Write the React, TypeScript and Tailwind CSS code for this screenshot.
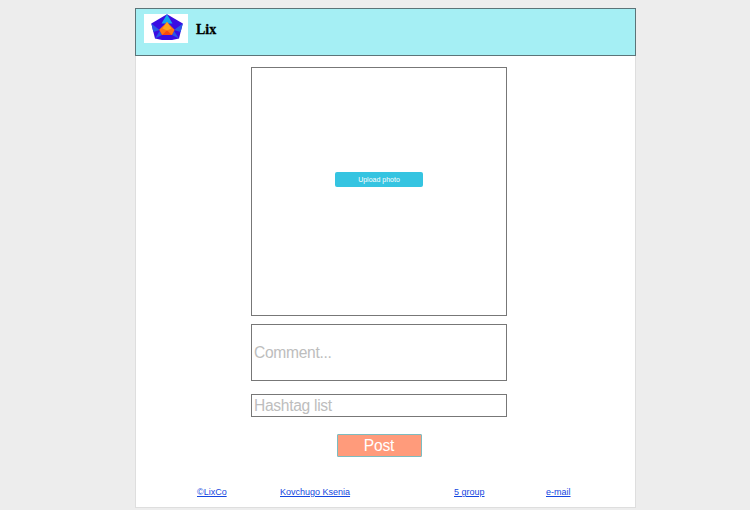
function Logo() {
  return (
    <svg viewBox="0 0 44 29" className="block h-[29px] w-11 shrink-0 bg-white">
      <polygon points="23,0.3 38.8,9.4 35,24.6 28,26 18,26 11,24.6 7.3,9.4" fill="#3a0ce2" />
      <polygon points="23,0.3 17.5,9.4 28.5,9.4" fill="#14a4ec" />
      <polygon points="7.3,9.4 9.4,18 15.7,16" fill="#2858e4" />
      <polygon points="38.8,9.4 36.6,18 30,16" fill="#2858e4" />
      <polygon points="15.7,17 11,24.6 18,21" fill="#2858e4" />
      <polygon points="30,17 35,24.6 28,21" fill="#2858e4" />
      <polygon points="23,8 30.6,15.7 28,21 18,21 15.2,15.7" fill="#ff7412" />
      <polygon points="23,8 27.5,14.5 23,16.5 18.5,14.5" fill="#ffa51c" />
      <polygon points="18,21 23,16.5 28,21" fill="#f9480e" />
    </svg>
  );
}

export default function App() {
  return (
    <div className="flex h-[510px] w-[750px] justify-center overflow-hidden bg-[#ededed] pt-2 pl-[21px] font-['Liberation_Sans',Arial,sans-serif]">
      <div className="h-[500px] w-[501px] border border-t-0 border-[#dedede] bg-white">
        <header className="-mx-px flex h-12 items-start border border-[#5c7478] bg-[#a5eff4] pt-[5px] pl-2">
          <Logo />
          <h1 className="mt-[7px] ml-[8px] font-['Liberation_Serif',serif] text-[14px] leading-[18px] font-bold text-black [-webkit-text-stroke:0.3px_black]">Lix</h1>
        </header>
        <main className="ml-[115px] flex w-64 flex-col items-center">
          <section className="mt-[11px] flex h-[249px] w-full justify-start border border-[#777777]">
            <button className="mt-[104px] ml-[83px] h-[15px] w-[88px] rounded-[2px] bg-[#35c4e1] text-[7px] leading-[15px] text-white">Upload photo</button>
          </section>
          <textarea
            placeholder="Comment..."
            className="mt-2 block h-[57px] w-full resize-none border border-[#777777] px-[2px] pt-[18px] text-[15.6px] leading-[20px] tracking-[-0.3px] outline-none placeholder:text-[#bdbdbd]"
          />
          <input
            placeholder="Hashtag list"
            className="mt-[13px] block h-[23px] w-full border border-[#777777] px-[2px] text-[15.6px] leading-[20px] tracking-[-0.3px] outline-none placeholder:text-[#bdbdbd]"
          />
          <button className="mt-[17px] h-[23px] w-[85px] rounded-[1px] border border-[#7cbcc0] bg-[#ff9b7b] text-[15.6px] leading-[21px] tracking-[-0.2px] text-white">Post</button>
        </main>
        <footer className="mt-[30px] flex pl-[61px] text-[9px] leading-[10px] whitespace-nowrap text-[#1547e0]">
          <a href="#" className="w-[83px] underline">©LixCo</a>
          <a href="#" className="w-[174px] underline">Kovchugo Ksenia</a>
          <a href="#" className="w-[92px] underline">5 group</a>
          <a href="#" className="underline">e-mail</a>
        </footer>
      </div>
    </div>
  );
}
